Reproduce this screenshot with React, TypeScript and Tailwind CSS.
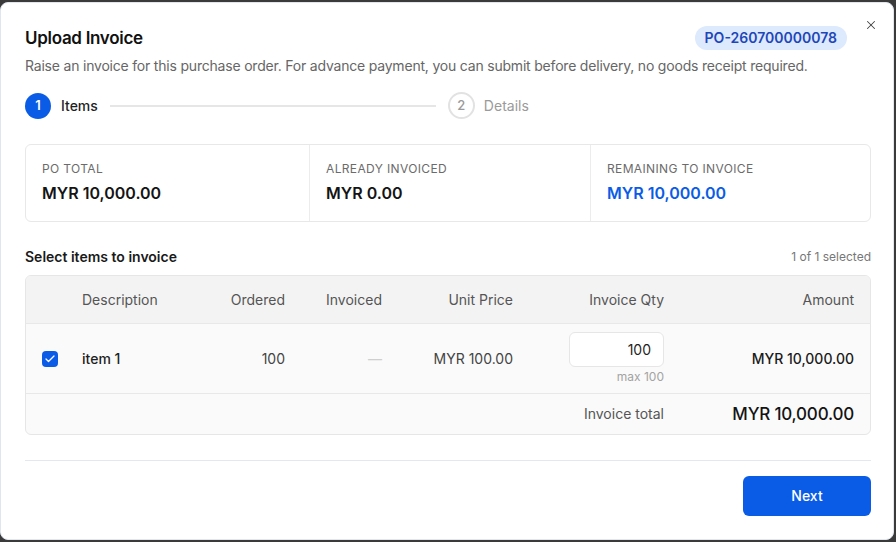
import { X, Check } from 'lucide-react'

const cols = 'grid grid-cols-[40px_124px_111px_97px_131px_151px_1fr]'

function Stepper() {
  return (
    <div className="mt-4 flex items-center">
      <div className="flex h-[26px] w-[26px] items-center justify-center rounded-full bg-[#0a5ce6] text-[13px] font-semibold text-white">
        1
      </div>
      <span className="ml-[10px] text-sm font-medium text-[#1f1f1f]">Items</span>
      <div className="mx-3 h-[2px] w-[326px] bg-[#e6e6e6]" />
      <div className="flex h-[27px] w-[27px] items-center justify-center rounded-full border-2 border-[#e2e2e2] text-[13px] font-medium text-[#9a9a9a]">
        2
      </div>
      <span className="ml-[9px] text-sm text-[#9a9a9a]">Details</span>
    </div>
  )
}

function Summary() {
  const items = [
    { label: 'PO TOTAL', value: 'MYR 10,000.00', blue: false },
    { label: 'ALREADY INVOICED', value: 'MYR 0.00', blue: false },
    { label: 'REMAINING TO INVOICE', value: 'MYR 10,000.00', blue: true },
  ]
  return (
    <div className="mt-[25px] grid grid-cols-[283px_281px_1fr] rounded-md border border-[#e8e8e8]">
      {items.map((it, i) => (
        <div key={it.label} className={`px-4 py-4 ${i > 0 ? 'border-l border-[#ececec]' : ''}`}>
          <div className="text-xs leading-4 tracking-[0.03em] text-[#6b6b6b]">{it.label}</div>
          <div className={`mt-[5px] text-base leading-[23px] font-semibold ${it.blue ? 'text-[#0a5ce6]' : 'text-[#141414]'}`}>
            {it.value}
          </div>
        </div>
      ))}
    </div>
  )
}

function ItemsTable() {
  return (
    <div className="mt-2 overflow-hidden rounded-md border border-[#e6e6e6] bg-[#fafafa] text-sm">
      <div className={`${cols} h-[48px] items-center border-b border-[#e8e8e8] bg-[#f3f3f3] text-[#555]`}>
        <div />
        <div className="pl-4">Description</div>
        <div className="pr-4 text-right">Ordered</div>
        <div className="pr-4 text-right">Invoiced</div>
        <div className="pr-4 text-right">Unit Price</div>
        <div className="pr-4 text-right">Invoice Qty</div>
        <div className="pr-4 text-right">Amount</div>
      </div>
      <div className={`${cols} h-[70px] items-center border-b border-[#e8e8e8]`}>
        <div className="pl-4">
          <div className="flex h-4 w-4 items-center justify-center rounded-[4px] bg-[#0a5ce6]">
            <Check className="h-3 w-3 text-white" strokeWidth={2.5} />
          </div>
        </div>
        <div className="pl-4 font-medium text-[#1f1f1f]">item 1</div>
        <div className="pr-4 text-right text-[#444]">100</div>
        <div className="pr-4 text-right text-[#cfcfcf]">—</div>
        <div className="pr-4 text-right text-[#444]">MYR 100.00</div>
        <div className="flex flex-col items-end self-start pt-[8px] pr-4">
          <div className="flex h-[35px] w-[95px] items-center justify-end rounded-md border border-[#e6e6e6] bg-white pr-3 text-[#1f1f1f]">
            100
          </div>
          <div className="mt-[2px] text-xs leading-4 text-[#a3a3a3]">max 100</div>
        </div>
        <div className="pr-4 text-right font-medium text-[#1a1a1a]">MYR 10,000.00</div>
      </div>
      <div className={`${cols} h-[40px] items-center`}>
        <div className="col-span-6 pr-4 text-right text-[#555]">Invoice total</div>
        <div className="pr-4 text-right text-[17px] font-medium tracking-[-0.2px] text-[#141414]">MYR 10,000.00</div>
      </div>
    </div>
  )
}

export default function App() {
  return (
    <div className="h-[542px] w-[896px] overflow-hidden bg-[#3a3a3a] pt-[2px] font-['Inter','Liberation_Sans',sans-serif]">
      <div className="relative flex h-[538px] w-[894px] flex-col rounded-lg border border-[#dfe6ef] bg-white pl-6 pr-[22px] pt-[21px]">
        <button className="absolute right-[15px] top-[15px] text-[#444]">
          <X className="h-[14px] w-[14px]" strokeWidth={1.75} />
        </button>
        <div className="mr-6 flex items-center justify-between">
          <h2 className="text-[17px] leading-7 font-semibold tracking-[-0.3px] text-[#111]">Upload Invoice</h2>
          <span className="rounded-full bg-[#dde9fd] px-[10px] py-[2px] text-sm font-semibold text-[#1d47b8]">
            PO-260700000078
          </span>
        </div>
        <p className="mt-[4px] text-sm leading-5 tracking-[-0.2px] text-[#666]">
          Raise an invoice for this purchase order. For advance payment, you can submit before delivery, no goods receipt required.
        </p>
        <Stepper />
        <Summary />
        <div className="mt-[25px] flex items-center justify-between">
          <span className="text-sm font-semibold text-[#1a1a1a]">Select items to invoice</span>
          <span className="text-xs text-[#777]">1 of 1 selected</span>
        </div>
        <ItemsTable />
        <div className="mt-[25px] border-t border-[#e4e8ee]" />
        <div className="mt-[15px] flex justify-end">
          <button className="h-10 w-32 rounded-md bg-[#0a5ce6] text-sm font-medium text-white">Next</button>
        </div>
      </div>
    </div>
  )
}
